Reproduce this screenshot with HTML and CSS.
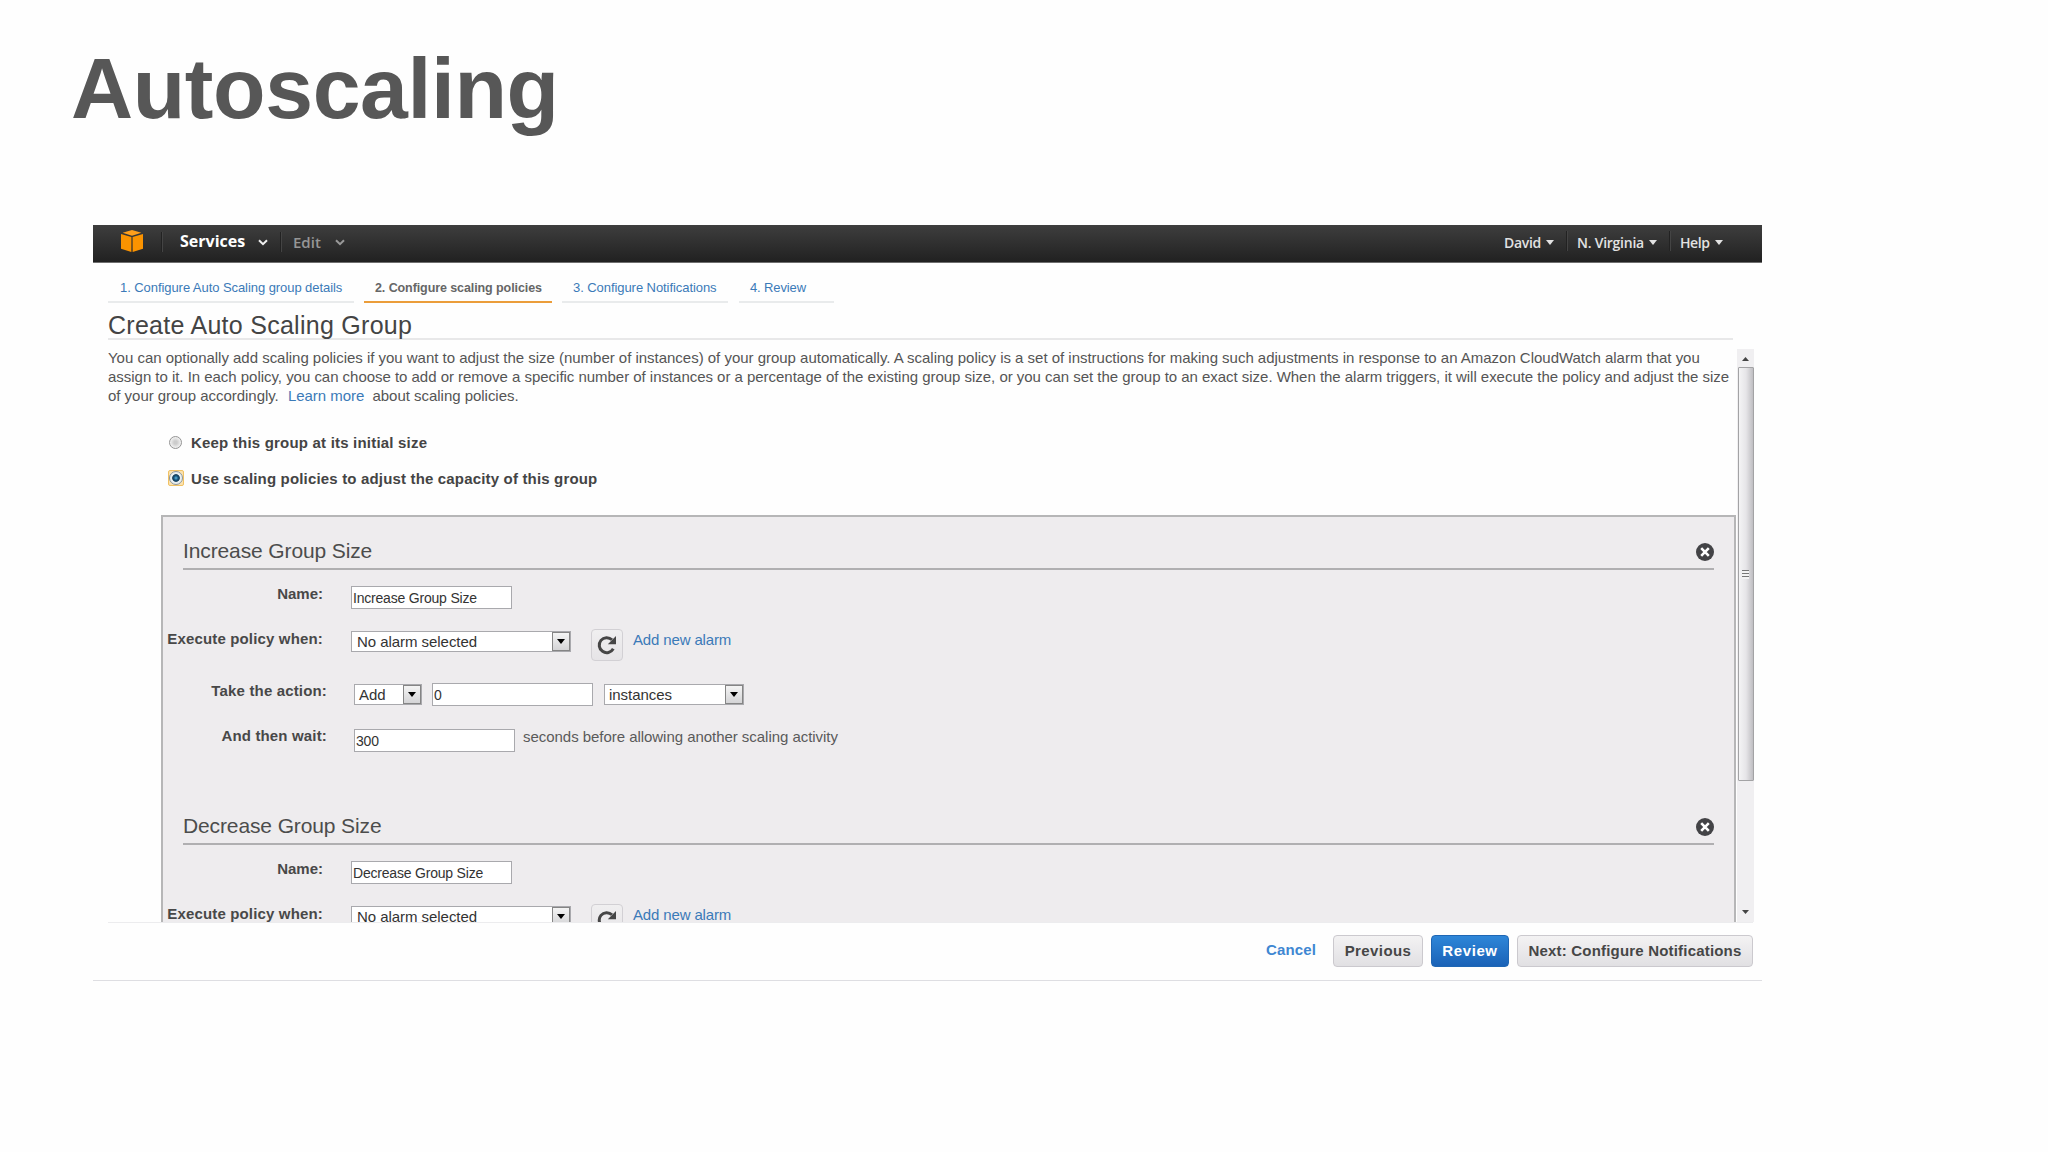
FILE: index.html
```html
<!DOCTYPE html>
<html lang="en">
<head>
<meta charset="utf-8">
<title>Autoscaling</title>
<link rel="stylesheet" href="styles.css">
</head>
<body>
<svg class="defs" width="0" height="0" aria-hidden="true">
  <symbol id="chevron" viewBox="0 0 10 7"><path d="M1 1.2l4 4 4-4" fill="none" stroke="currentColor" stroke-width="2"/></symbol>
  <symbol id="caret" viewBox="0 0 8 5"><path d="M0 0h8L4 5z" fill="currentColor"/></symbol>
  <symbol id="refresh" viewBox="0 0 20 20"><path d="M16.300 13.800A7.500 7.500 0 1 1 15 4.800" fill="none" stroke="currentColor" stroke-width="3"/><path d="M19 1v8.200h-8.200z" fill="currentColor"/></symbol>
  <symbol id="close" viewBox="0 0 18 18"><circle cx="9" cy="9" r="9" fill="#434346"/><path d="M5.2 5.2l7.6 7.6M12.8 5.2l-7.6 7.6" stroke="#fff" stroke-width="2.6"/></symbol>
</svg>
<h1 class="slide-title">Autoscaling</h1>
<div class="console">
  <nav class="navbar">
    <svg class="logo" width="22" height="22" viewBox="0 0 22 22"><path d="M11 0l9.400 2.800L11 5.800 1.600 2.800z" fill="#ff9f1c"/><path d="M0 4l10.400 3V22L0 18.800z" fill="#fb9300"/><path d="M22 4L11.600 7V22L22 18.800z" fill="#fb9300"/></svg>
    <span class="sep sep-logo"></span>
    <span class="services">Services</span><svg class="chev" width="10" height="7"><use href="#chevron"/></svg>
    <span class="sep sep-services"></span>
    <span class="edit">Edit</span><svg class="chev chev-dim" width="10" height="7"><use href="#chevron"/></svg>
    <div class="account">
      <span class="acct">David</span><svg class="caret" width="8" height="5"><use href="#caret"/></svg>
      <span class="sep"></span>
      <span class="acct region">N. Virginia</span><svg class="caret" width="8" height="5"><use href="#caret"/></svg>
      <span class="sep"></span>
      <span class="acct help">Help</span><svg class="caret" width="8" height="5"><use href="#caret"/></svg>
    </div>
  </nav>
  <div class="steps">
    <a class="step step-1">1. Configure Auto Scaling group details</a>
    <a class="step step-2 active">2. Configure scaling policies</a>
    <a class="step step-3">3. Configure Notifications</a>
    <a class="step step-4">4. Review</a>
  </div>
  <h2 class="heading">Create Auto Scaling Group</h2>
  <div class="pane">
    <div class="content">
      <p class="intro"><span class="first-line">You can optionally add scaling policies if you want to adjust the size (number of instances) of your group automatically. A scaling policy is a set of instructions for making such adjustments in response to an Amazon CloudWatch alarm that you</span><br>assign to it. In each policy, you can choose to add or remove a specific number of instances or a percentage of the existing group size, or you can set the group to an exact size. When the alarm triggers, it will execute the policy and adjust the size<br>of your group accordingly. <a class="learn">Learn more</a> about scaling policies.</p>
      <div class="choices">
        <label class="choice"><span class="radio"></span>Keep this group at its initial size</label>
        <label class="choice"><span class="focus"><span class="radio checked"></span></span>Use scaling policies to adjust the capacity of this group</label>
      </div>
      <div class="panel">
        <section class="policy">
          <header class="policy-head"><h3>Increase Group Size</h3><svg class="close" width="18" height="18"><use href="#close"/></svg></header>
          <div class="form">
            <div class="row name"><span class="label">Name:</span><input class="text" value="Increase Group Size"></div>
            <div class="row execute"><span class="label">Execute policy when:</span><span class="select alarm">No alarm selected<i class="drop"><svg width="8" height="5"><use href="#caret"/></svg></i></span><span class="refresh"><svg width="20" height="20"><use href="#refresh"/></svg></span><a class="link">Add new alarm</a></div>
            <div class="row action"><span class="label">Take the action:</span><span class="select verb">Add<i class="drop"><svg width="8" height="5"><use href="#caret"/></svg></i></span><input class="text" value="0"><span class="select unit">instances<i class="drop"><svg width="8" height="5"><use href="#caret"/></svg></i></span></div>
            <div class="row wait"><span class="label">And then wait:</span><input class="text" value="300"><span class="note">seconds before allowing another scaling activity</span></div>
          </div>
        </section>
        <section class="policy">
          <header class="policy-head"><h3>Decrease Group Size</h3><svg class="close" width="18" height="18"><use href="#close"/></svg></header>
          <div class="form">
            <div class="row name"><span class="label">Name:</span><input class="text" value="Decrease Group Size"></div>
            <div class="row execute"><span class="label">Execute policy when:</span><span class="select alarm">No alarm selected<i class="drop"><svg width="8" height="5"><use href="#caret"/></svg></i></span><span class="refresh"><svg width="20" height="20"><use href="#refresh"/></svg></span><a class="link">Add new alarm</a></div>
          </div>
        </section>
      </div>
    </div>
    <div class="scrollbar">
      <svg class="arrow" width="7" height="4" viewBox="0 0 7 4"><path d="M3.500 0L7 4H0z" fill="#444"/></svg>
      <div class="thumb"><span class="grip"></span></div>
      <svg class="arrow" width="7" height="4" viewBox="0 0 7 4"><path d="M0 0h7L3.500 4z" fill="#444"/></svg>
    </div>
  </div>
  <footer class="actions">
    <a class="cancel">Cancel</a>
    <button class="btn previous">Previous</button>
    <button class="btn primary">Review</button>
    <button class="btn next">Next: Configure Notifications</button>
  </footer>
</div>
</body>
</html>
```

FILE: styles.css
```css
* { box-sizing: border-box; }
body {
  margin: 0;
  height: 1152px;
  overflow: hidden;
  background: #fefefe;
  color: #555;
  font: 15px/20px "Liberation Sans", Arial, sans-serif;
  white-space: nowrap;
}
h1, h2, h3, p { margin: 0; font-weight: 400; }
.defs { display: block; height: 0; }
a { color: #3b7ab8; }

.slide-title {
  padding: 38px 0 0 71px;
  font-size: 86px;
  line-height: 100px;
  font-weight: 700;
  letter-spacing: -0.4px;
  color: #575757;
}
.console { width: 1669px; margin: 87px 0 0 93px; border-bottom: 1px solid #dedee2; }

.navbar {
  display: flex;
  align-items: center;
  height: 38px;
  padding: 0 39px 0 28px;
  background: linear-gradient(#3e3e3e, #212121);
  border-bottom: 1px solid #6f6f6f;
  font-family: "Open Sans", sans-serif;
  color: #e2e2e2;
}
.logo { margin-top: -5px; }
.sep { width: 2px; height: 20px; margin-top: -4px; border-left: 1px solid #222; border-right: 1px solid #444; }
.sep-logo { margin-left: 18px; }
.services { width: 66px; margin: -6px 12px 0 17px; font-size: 16px; font-weight: 700; color: #fff; }
.chev { margin-top: -2px; color: #eee; }
.sep-services { margin-left: 12px; }
.edit { width: 29px; margin: -3px 13px 0 11px; font-size: 15px; font-weight: 600; color: #969696; }
.chev-dim { color: #999; }
.account { display: flex; align-items: center; margin: -2px 0 0 auto; font-size: 14px; font-weight: 600; }
.acct { width: 37px; margin-right: 5px; letter-spacing: -0.3px; }
.region { width: 67px; margin-left: 9px; letter-spacing: -0.25px; }
.help { width: 30px; margin-left: 9px; letter-spacing: -0.4px; }
.caret { margin-right: 12px; margin-top: -1px; }
.account .caret:last-child { margin-right: 0; }

.steps { display: flex; height: 40px; padding: 15px 0 0 15px; gap: 10px; font-size: 13px; }
.step { padding: 0 0 3px 12px; border-bottom: 2px solid #e9ebec; letter-spacing: -0.065px; }
.step-1 { width: 246px; }
.step-2 { width: 188px; padding-left: 11px; font-size: 12.5px; font-weight: 700; letter-spacing: -0.09px; }
.active { color: #666; border-color: #eb9d3a; }
.step-3 { width: 166px; padding-left: 11px; }
.step-4 { width: 95px; margin-left: 1px; padding-left: 11px; letter-spacing: -0.12px; }
.heading {
  width: 1625px;
  height: 30px;
  margin: 7px 0 0 15px;
  border-bottom: 2px solid #e8e8e9;
  font-size: 25px;
  line-height: 30px;
  letter-spacing: 0.27px;
  color: #444;
}

.pane { display: flex; height: 573px; margin: 9px 8px 0 15px; overflow: hidden; }
.content { width: 1629px; height: 573px; overflow: hidden; }
.intro { margin-top: -1px; line-height: 19px; letter-spacing: -0.028px; }
.first-line { letter-spacing: -0.018px; }
.learn { margin: 0 4px 0 5px; }
.choices { display: flex; flex-direction: column; gap: 16px; padding: 28px 0 26px 60px; }
.choice { display: flex; align-items: center; height: 20px; font-weight: 700; letter-spacing: 0.17px; color: #444; }
.choice:first-child { letter-spacing: 0.2px; }
.radio {
  width: 13px;
  height: 13px;
  margin: -2px 9px 0 1px;
  border: 1px solid #949494;
  border-radius: 50%;
  background: radial-gradient(circle, #ccc 20%, #eee 65%, #fff);
}
.focus {
  display: flex;
  width: 16px;
  height: 16px;
  margin: -3px 7px 0 0;
  border: 1px solid #f1c264;
  border-radius: 2px;
  background: #fbe2b0;
}
.checked {
  width: 14px;
  height: 14px;
  margin: 0;
  border-color: #8c959a;
  background: radial-gradient(circle at 50% 50%, #5eb8e0 0, #17557e 25%, #143c57 40%, #e8eef0 50%);
}
.panel {
  height: 600px;
  margin: 0 1px 0 53px;
  padding: 21px 20px 0;
  border: 2px solid #b6b6b7;
  background: #eeecee;
}
.policy { height: 275px; }
.policy-head {
  display: flex;
  justify-content: space-between;
  height: 32px;
  border-bottom: 2px solid #b0afb1;
}
h3 { font-size: 21px; line-height: 26px; letter-spacing: -0.12px; color: #4c4c4c; }
.close { margin: 5px 0 0; }
.form { margin-left: -20px; padding-top: 14px; }
.row { display: flex; align-items: flex-start; height: 45px; }
.execute { height: 52px; }
.label { width: 160px; margin-right: 28px; text-align: right; font-weight: 700; letter-spacing: 0.16px; color: #484848; }
.action .label, .wait .label { width: 164px; margin-right: 27px; }
.name .label { letter-spacing: 0; }
.text {
  width: 161px;
  height: 23px;
  margin: 2px 0 0;
  padding: 0 0 0 1px;
  border: 1px solid #a9a9ad;
  background: #fff;
  font: 14px "Liberation Sans", Arial, sans-serif;
  letter-spacing: -0.2px;
  color: #333;
}
.action .text, .wait .text { width: 161px; margin-top: 3px; }
.select {
  display: flex;
  justify-content: space-between;
  height: 21px;
  margin-top: 2px;
  padding-left: 5px;
  border: 1px solid #a9a9ad;
  background: #fff;
  line-height: 20px;
  letter-spacing: -0.05px;
  color: #333;
}
.drop {
  display: flex;
  align-items: center;
  justify-content: center;
  width: 18px;
  height: 19px;
  border: 1px solid #858585;
  background: linear-gradient(#f4f4f4, #d4d4d6);
  color: #000;
}
.alarm { width: 220px; }
.refresh {
  display: flex;
  align-items: center;
  justify-content: center;
  width: 32px;
  height: 32px;
  margin: 0 10px 0 20px;
  border: 1px solid #d2d0d4;
  border-radius: 4px;
  background: linear-gradient(#f0eff0, #e6e4e7);
  color: #464646;
}
.link { margin-top: 1px; letter-spacing: -0.14px; }
.verb { width: 68px; margin: 3px 10px 0 0; padding-left: 4px; }
.unit { width: 140px; margin: 3px 0 0 11px; padding-left: 4px; }
.action .text { margin-top: 2px; }
.note { margin-left: 8px; margin-top: 1px; letter-spacing: -0.04px; color: #5a5a5a; }

.scrollbar {
  display: flex;
  flex-direction: column;
  align-items: center;
  width: 17px;
  height: 573px;
  padding: 8px 0;
  background: #f0eff1;
}
.thumb {
  display: flex;
  align-items: center;
  justify-content: center;
  width: 16px;
  height: 414px;
  margin: 6px 0 auto;
  border: 1px solid #a3a3a5;
  border-radius: 1px;
  background: linear-gradient(90deg, #f4f4f5, #e6e5e8 50%, #bfbec2);
}
.grip { width: 7px; height: 9px; background: repeating-linear-gradient(#777 0 1px, #f3f3f3 1px 3px); }

.actions {
  display: flex;
  align-items: flex-start;
  justify-content: flex-end;
  height: 58px;
  margin: 0 9px 0 15px;
  padding-top: 12px;
  border-top: 1px solid #ececee;
}
.cancel { margin: 5px 17px 0 0; font-weight: 700; letter-spacing: 0.13px; color: #3f87d2; }
.btn {
  height: 32px;
  padding: 0 0 1px;
  border: 1px solid #cbc9ce;
  border-radius: 4px;
  background: linear-gradient(#f3f2f3, #e1e0e3);
  color: #464646;
  font: 700 15px/20px "Liberation Sans", Arial, sans-serif;
  letter-spacing: 0.19px;
}
.previous { width: 90px; letter-spacing: 0.4px; }
.primary { width: 78px; margin: 0 8px; border-color: #1e66b4; background: linear-gradient(#2e86d8, #1a62b7); color: #fff; letter-spacing: 0.6px; }
.next { width: 236px; }
```
